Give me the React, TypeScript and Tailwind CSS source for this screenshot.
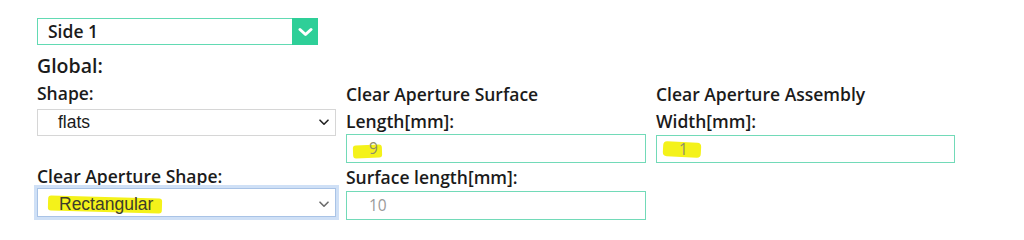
import React from "react";

const labelCls = "text-[17.5px] font-semibold text-[#1b1b1b]";

function SmallChevron({ color }: { color: string }) {
  return (
    <svg width="10" height="7" viewBox="0 0 10 7" fill="none">
      <polyline points="1,1.2 5,5.2 9,1.2" stroke={color} strokeWidth="1.6" strokeLinecap="round" strokeLinejoin="round" />
    </svg>
  );
}

export default function App() {
  return (
    <div className="w-[1024px] h-[220px] overflow-hidden bg-white pl-[37px] pt-[18px] font-['Open_Sans',sans-serif]">
      {/* Side selector */}
      <div className="flex h-[27px] w-[281px]">
        <div className="flex flex-1 items-center border border-r-0 border-[#62dab3] pl-[10px] text-[17.5px] font-semibold text-[#1b1b1b]">
          Side 1
        </div>
        <div className="flex w-[26px] items-center justify-center bg-[#2ecf98]">
          <svg width="15" height="10" viewBox="0 0 15 10" fill="none">
            <polyline points="2,2.5 7.5,7.5 13,2.5" stroke="#ffffff" strokeWidth="3" strokeLinecap="round" strokeLinejoin="round" />
          </svg>
        </div>
      </div>

      <div className="mt-[9px] text-[19.5px] font-semibold leading-[24px] text-[#1b1b1b]">Global:</div>

      <div className="mt-[3px] grid grid-cols-[299px_300px_299px] gap-x-[10px]">
        {/* Column 1 */}
        <div className="flex flex-col">
          <div className={`${labelCls} leading-[24px]`}>Shape:</div>
          <div className="mt-[4px] flex h-[27px] items-center justify-between border border-[#d6d6d6] pl-[20px] pr-[6px] font-['Liberation_Sans',Arial,sans-serif] text-[17.5px] text-[#1a1a1a]">
            <span>flats</span>
            <SmallChevron color="#222222" />
          </div>
          <div className={`${labelCls} mt-[28px] leading-[24px]`}>Clear Aperture Shape:</div>
          <div className="relative flex h-[29px] items-center justify-between border border-[#a9c3e6] pl-[21px] pr-[6px] pt-[3px] font-['Liberation_Sans',Arial,sans-serif] text-[17.5px] text-[#3d3d2a] outline outline-[3px] outline-[#cfe0f6]">
            <span className="absolute left-[10px] top-[8px] h-[15px] w-[114px] rotate-[1.5deg] rounded-[3px] bg-[#f4f21a]" />
            <span className="relative">Rectangular</span>
            <SmallChevron color="#6b6b6b" />
          </div>
        </div>

        {/* Column 2 */}
        <div className="flex flex-col">
          <div className={`${labelCls} leading-[26.6px]`}>
            Clear Aperture Surface
            <br />
            Length[mm]:
          </div>
          <div className="relative flex h-[29px] items-center border border-[#72dab8] pl-[22px] text-[15.5px] text-[#8d8d6a]">
            <span className="absolute left-[6px] top-[10px] h-[13px] w-[29px] -rotate-[2deg] rounded-[3px] bg-[#f4f21a]" />
            <span className="relative">9</span>
          </div>
          <div className={`${labelCls} mt-[2px] leading-[24px]`}>Surface length[mm]:</div>
          <div className="mt-[2px] flex h-[29px] items-center border border-[#72dab8] pl-[22px] text-[15.5px] text-[#9a9a9a]">
            10
          </div>
        </div>

        {/* Column 3 */}
        <div className="flex flex-col">
          <div className={`${labelCls} leading-[26.6px]`}>
            Clear Aperture Assembly
            <br />
            Width[mm]:
          </div>
          <div className="relative mt-[1px] flex h-[28px] items-center border border-[#72dab8] pl-[22px] text-[15.5px] text-[#8d8d6a]">
            <span className="absolute left-[6px] top-[6px] h-[15px] w-[38px] rotate-[3deg] rounded-[4px] bg-[#f4f21a]" />
            <span className="relative">1</span>
          </div>
        </div>
      </div>
    </div>
  );
}
